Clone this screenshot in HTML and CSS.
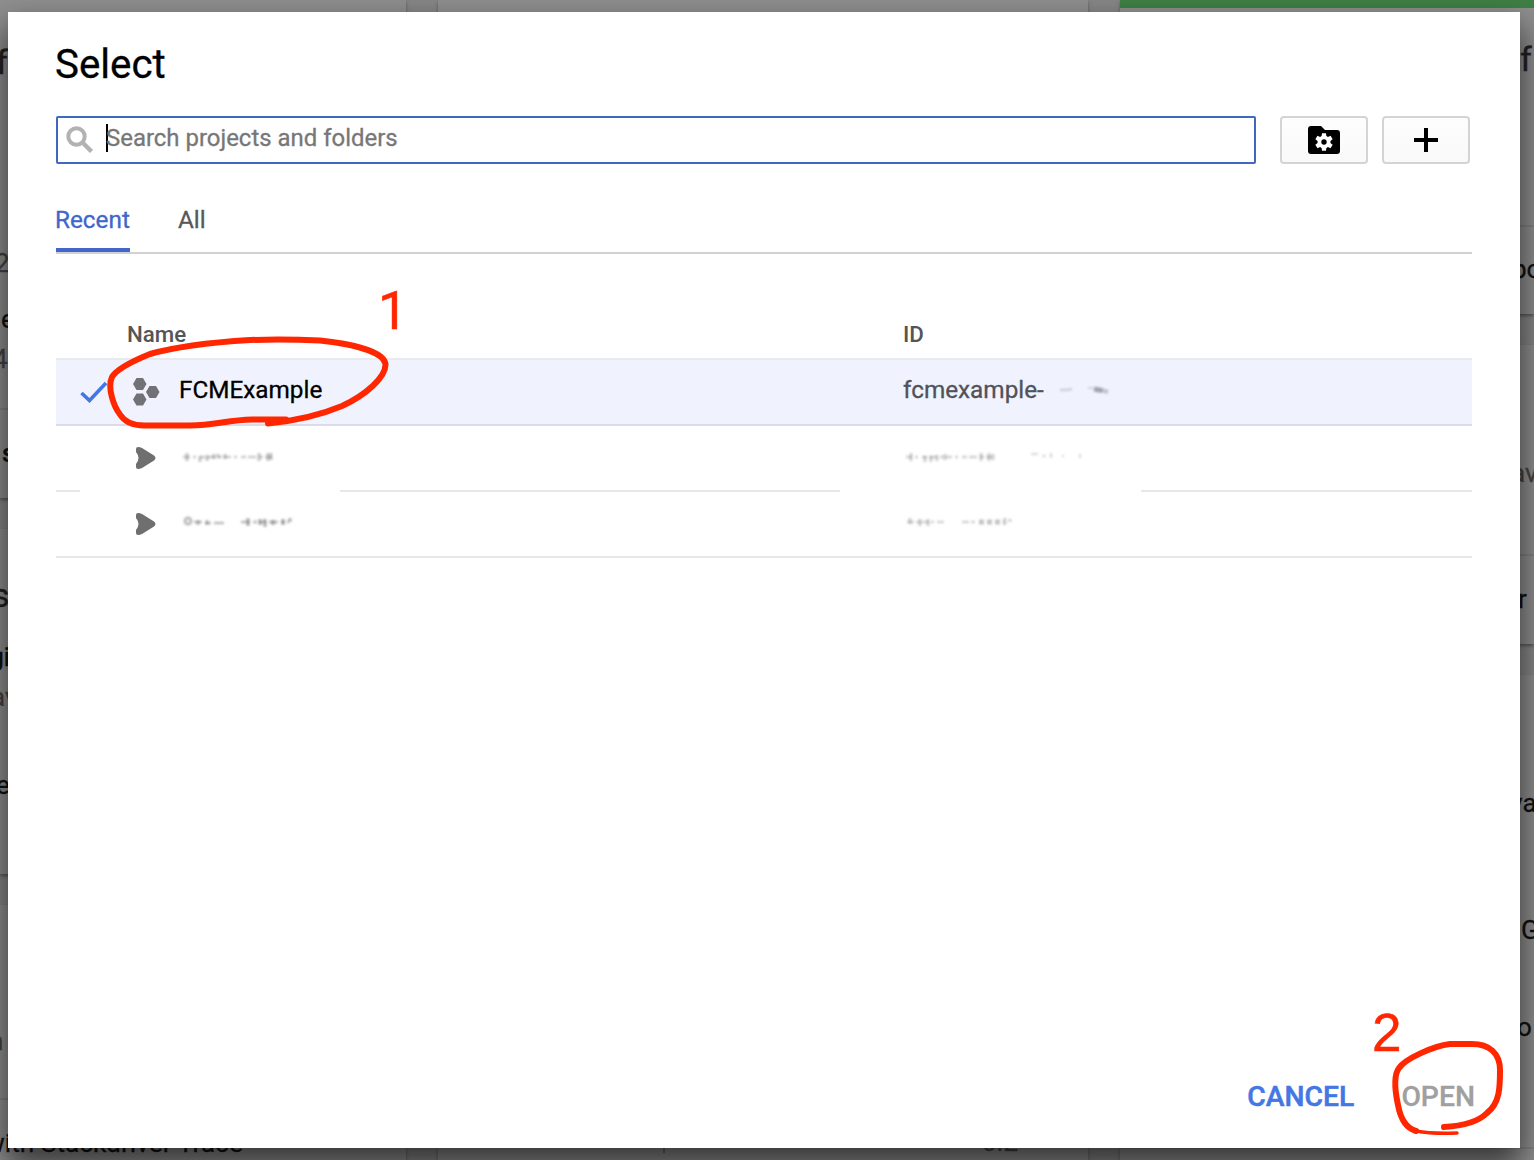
FILE: index.html
```html
<!DOCTYPE html>
<html lang="en">
<head>
<meta charset="utf-8">
<title>Select</title>
<link rel="stylesheet" href="styles.css">
</head>
<body>
<div class="dashboard" aria-hidden="true">
  <div class="column column-left">
    <div class="card l1"><p class="big l-f">f</p><p class="muted l-2">2</p><p class="l-e">e</p><p class="muted l-4">4</p><p class="strong rule l-s">s</p></div>
    <div class="card l2"><p class="big l-s2">s</p><p class="strong l-gi">gi</p><p class="muted l-av">av</p><p class="l-e2">e</p></div>
    <div class="card l3"><p class="muted l-n">n</p><p class="rule l-with">with Stackdriver Trace</p></div>
  </div>
  <div class="column column-middle">
    <div class="card mid"><i class="tick"></i><p class="muted value">0.2</p></div>
  </div>
  <div class="column column-right">
    <div class="card r1"><p class="big r-f">f</p><p class="rule r-bo">bo</p></div>
    <div class="card r2"><p class="muted r-av">av</p><p class="rule r-r">r</p></div>
    <div class="card r3"><p class="r-va">va</p><p class="r-g">G</p><p class="r-ol">o</p><p class="rule"></p></div>
  </div>
</div>

<main class="dialog" role="dialog">
  <h1 class="title">Select</h1>
  <div class="toolbar">
    <div class="search">
      <svg class="search-icon" width="28" height="28" viewBox="0 0 28 28"><circle cx="10.5" cy="10.5" r="8.2" fill="none" stroke="#b2b2b2" stroke-width="4"/><path d="M16.5 16.5 25.5 25.5" stroke="#b2b2b2" stroke-width="4.4"/></svg>
      <span class="caret"></span><span class="placeholder">Search projects and folders</span>
    </div>
    <button class="tool"><svg width="32" height="28" viewBox="0 0 32 28"><path d="M3 0H13L17 4H29Q32 4 32 7V25Q32 28 29 28H3Q0 28 0 25V3Q0 0 3 0Z"/><g transform="translate(16 16)" fill="#fff"><circle r="6.5"/><g id="teeth"><path d="M-2-8.8H2L2.6-4H-2.6Z"/><path d="M-2 8.8H2L2.6 4H-2.6Z"/></g><use href="#teeth" transform="rotate(60)"/><use href="#teeth" transform="rotate(120)"/></g><circle cx="16" cy="16" r="2.7"/></svg></button>
    <button class="tool"><svg width="24" height="24" viewBox="0 0 24 24"><path d="M10 0h4v10h10v4H14v10h-4V14H0v-4h10z"/></svg></button>
  </div>
  <nav class="tabs"><span class="tab active">Recent</span><span class="tab">All</span></nav>
  <div class="table">
    <div class="row head"><span>Name</span><span>ID</span></div>
    <div class="row selected">
      <svg class="check" width="28" height="22" viewBox="0 0 28 22"><path d="M1.5 12 9.5 19.5 26 2" fill="none" stroke="#4277e4" stroke-width="3.6"/></svg>
      <svg class="icon" width="28" height="30" viewBox="0 0 28 30" fill="#707278"><path id="hex" d="M3.5 1H10L13.5 7 10 13H3.5L0 7Z"/><use href="#hex" y="15.5"/><use href="#hex" x="13" y="8"/></svg>
      <span class="name">FCMExample</span>
      <span class="id">fcmexample-</span>
      <svg class="smudge tail" width="56" height="16" viewBox="0 0 56 16" fill="none" stroke="#777b88"><path d="M3 8h6l6-1" stroke-width="2.5" opacity=".28"/><path d="M31 6h5" stroke-width="2" opacity=".25"/><path d="M37 7 45 8.500" stroke-width="5" opacity=".65"/><path d="M44 8 51 10" stroke-width="4" opacity=".4"/></svg>
    </div>
    <div class="row gaps">
      <svg class="icon arrow" width="22" height="24" viewBox="0 0 22 24"><path d="M3 1Q5 1 7 2L19 9.500Q22 12 19 14.500L7 22Q5 23 3 23Q1 23 1 21V18Q6 12 1 6V3Q1 1 3 1Z" fill="#6f6f6f"/></svg>
      <svg class="smudge name" width="96" height="18" viewBox="0 0 96 18" fill="none" stroke="#555"><path d="M1 9h91" stroke-width="2.5" stroke-dasharray="7 3 3 4 5 2 8 3 4 2" opacity=".3"/><path d="M5 5v8M18 8v6M25 7v6M32 6v5M36 6v4M43 6v5M77 5v8M86 5v8M89 5v7" stroke-width="3" opacity=".32"/></svg>
      <svg class="smudge id" width="182" height="18" viewBox="0 0 182 18" fill="none" stroke="#555"><path d="M3 9h88" stroke-width="2.5" stroke-dasharray="6 3 3 4 5 2 8 3 4 2" opacity=".27"/><path d="M8 5v8M22 8v6M28 8v6M34 7v6M42 6v6M78 5v8M86 5v8M90 6v6" stroke-width="3" opacity=".28"/><path d="M128 6h7M139 8h4M148 5v5M159 8h2M177 6v4" stroke-width="2.5" opacity=".2"/></svg>
    </div>
    <div class="row">
      <svg class="icon arrow" width="22" height="24" viewBox="0 0 22 24"><path d="M3 1Q5 1 7 2L19 9.500Q22 12 19 14.500L7 22Q5 23 3 23Q1 23 1 21V18Q6 12 1 6V3Q1 1 3 1Z" fill="#6f6f6f"/></svg>
      <svg class="smudge name" width="112" height="18" viewBox="0 0 112 18" fill="none" stroke="#555"><circle cx="6" cy="8" r="3" stroke-width="3" opacity=".38"/><path d="M12 9h8M23 10h6M32 10h10" stroke-width="2.5" opacity=".38"/><path d="M16 7v5M25 7v5" stroke-width="3" opacity=".35"/><path d="M59 9h48" stroke-width="3" stroke-dasharray="9 3 4 2 7 3" opacity=".35"/><path d="M66 5v8M78 6v6M83 6v8M91 7v5M101 6v6M108 5v4" stroke-width="3.5" opacity=".4"/></svg>
      <svg class="smudge id" width="112" height="18" viewBox="0 0 112 18" fill="none" stroke="#555"><path d="M4 9h27M34 9h8M59 9h13" stroke-width="2.5" stroke-dasharray="7 2 5 1" opacity=".25"/><path d="M76 9h25" stroke-width="5" stroke-dasharray="5 3" opacity=".35"/><path d="M7 5v6M17 6v7M25 6v7M102 5v7M107 6v3" stroke-width="3" opacity=".28"/></svg>
    </div>
  </div>
  <footer class="actions"><button class="cancel">CANCEL</button><button class="open">OPEN</button></footer>
</main>

<svg class="ink" width="1534" height="1160" viewBox="0 0 1534 1160" fill="none" stroke="#ff2600" stroke-width="6" stroke-linecap="round" stroke-linejoin="round">
  <path d="M268 423.500C298 420.500 323 414 342 406C366 395 386 377 385.500 364C384 354 362 345 320 340.500Q285 339 250 340Q185 344 150 354Q118 367 112 377C107 388 114 407 120 414.500Q127 425.500 144 425.500H190C215 425.500 227 420 252 419.500H286"/>
  <path d="M1444 1127C1464 1126 1478 1122 1487 1113C1500 1103 1500 1087 1500 1070C1500 1053 1489 1044 1472 1044H1450C1433 1046 1405 1059 1399 1068C1393 1076 1395 1091 1398 1105Q1402 1127 1416 1131" />
  <path d="M1416 1131Q1432 1134 1457 1133" stroke-width="3.500"/>
</svg>
<span class="step step-1">1</span>
<span class="step step-2">2</span>
</body>
</html>
```
FILE: styles.css
```css
* { box-sizing: border-box; }
body { margin: 0; width: 1534px; height: 1160px; overflow: hidden; position: relative; background: #878787; font-family: Roboto, "Liberation Sans", sans-serif; -webkit-text-stroke: .3px currentColor; }
p, h1 { margin: 0; font-weight: 400; }
button { font: inherit; margin: 0; }

.dashboard { display: flex; gap: 32px; width: 1534px; height: 1160px; overflow: hidden; }
.column { display: flex; flex-direction: column; gap: 31px; flex: none; }
.column-left { width: 406px; }
.column-middle { width: 650px; }
.column-right { width: 414px; }
.card { background: #8f8f8f; box-shadow: 0 2px 3px rgba(0,0,0,.35); flex: none; overflow: hidden; }
.card p { font-size: 26px; line-height: 32px; color: #111; white-space: nowrap; }
.card .big { font-size: 34px; color: #222; }
.card .muted { color: #444; }
.card .strong { font-weight: 500; }
.card .rule { border-top: 2px solid #828282; }
.l1 { height: 498px; padding-top: 46px; }
.l2 { height: 345px; padding-top: 50px; }
.l3 { height: 280px; padding-top: 120px; }
.l-f { margin-left: -4px; }
.l-2 { margin: 169px 0 0 -5px; }
.l-e { margin: 24px 0 0 1px; }
.l-4 { margin: 8px 0 0 -7px; }
.card .l-s { margin-top: 33px; padding: 27px 0 0 2px; }
.l-s2 { margin-left: -8px; }
.l-gi { margin: 30px 0 0 -11px; }
.l-av { margin: 8px 0 0 -9px; }
.l-e2 { margin: 56px 0 0 -4px; }
.l-n { margin-left: -11px; }
.card .l-with { margin-top: 41px; padding-top: 27px; text-indent: -15px; font-size: 26.3px; }
.mid { height: 1200px; display: flex; flex-direction: column; }
.tick { width: 2px; height: 10px; margin: 1143px 0 0 225px; background: #666; }
.mid .value { margin: -27px 0 0 544px; }
.r1 { height: 314px; padding-top: 38px; border-top: 8px solid #3f8045; }
.r2 { height: 299px; padding-top: 112px; }
.r3 { height: 520px; padding-top: 112px; }
.card .r-f { margin: -4px 0 0 400px; line-height: 34px; }
.card .r-bo { margin-top: 149px; padding: 26px 0 0 392px; }
.r-av { margin-left: 391px; }
.card .r-r { margin-top: 65px; padding: 27px 0 0 398px; }
.r-va { margin-left: 390px; }
.r-g { margin: 95px 0 0 401px; }
.r-ol { margin: 65px 0 0 397px; }
.r-ol + .rule { margin-top: 104px; }

.dialog { position: absolute; left: 8px; top: 12px; width: 1512px; height: 1136px; background: #fff; padding: 29px 48px 23px; display: flex; flex-direction: column; box-shadow: 0 16px 30px 2px rgba(0,0,0,.62); }
.title { font-size: 40.3px; line-height: 48px; color: #000; margin-left: -1px; }
.toolbar { display: flex; margin-top: 27px; height: 48px; }
.search { width: 1200px; border: 2px solid #4069bd; border-radius: 2px; display: flex; align-items: center; padding-left: 8px; }
.search-icon { margin-top: 0; }
.caret { width: 2px; height: 28px; background: #000; margin: -4px 0 0 12px; }
.placeholder { font-size: 23.95px; line-height: 32px; color: #777; margin: -5px 0 0 -2px; }
.tool { width: 88px; height: 48px; display: flex; align-items: center; justify-content: center; padding: 0; border: 2px solid #d4d4d4; border-radius: 4px; background: linear-gradient(#fdfdfd, #f9f9f9); margin-left: 24px; }
.tool + .tool { margin-left: 14px; }
.tabs { display: flex; gap: 48px; height: 66px; margin-top: 24px; border-bottom: 2px solid #d2d2d2; font-size: 24.3px; line-height: 64px; color: #585858; }
.tab { height: 64px; }
.tab.active { color: #4066cc; width: 74px; border-bottom: 4px solid #4265ce; text-indent: -1px; }
.table { margin-top: 62px; color: #50525a; font-size: 24.3px; }
.row { display: grid; grid-template-columns: 24px 52px 47px 724px auto 1fr; align-items: center; height: 66px; border-bottom: 2px solid #e7e7e7; }
.head { grid-template-columns: 71px 776px 1fr; height: 44px; padding-bottom: 6px; font-size: 22.3px; font-weight: 500; color: #555; border-color: #e8eaef; -webkit-text-stroke: 0; }
.head span:first-child { grid-column: 2; }
.selected { background: #f0f3fd; border-color: #d9dce8; }
.check { grid-column: 1 / span 2; margin-left: 24px; grid-row: 1; }
.icon { grid-column: 3; grid-row: 1; margin-left: 1px; }
.arrow { margin: 0 0 0 3px; }
.gaps .arrow { margin-top: -2px; }
.name { grid-column: 4; grid-row: 1; }
.id { grid-column: 5; grid-row: 1; }
span.name { color: #000; margin-top: -6px; }
span.id { margin-top: -6px; }
.smudge { filter: blur(1px); margin-top: -4px; }
.smudge.name { margin-left: 3px; }
.smudge.tail { margin-left: 13px; }
.gaps { border-bottom: 0; background: linear-gradient(90deg, #e7e7e7 24px, transparent 24px 284px, #e7e7e7 284px 784px, transparent 784px 1085px, #e7e7e7 1085px) bottom / 100% 2px no-repeat; }
.actions { display: flex; justify-content: flex-end; margin-top: auto; gap: 47px; margin-right: -3px; }
.actions button { border: 0; background: none; padding: 0; font-size: 28.3px; line-height: 56px; font-weight: 500; }
.actions .cancel { color: #4277e4; -webkit-text-stroke: .5px currentColor; }
.open { color: #a0a0a0; }

.ink { position: absolute; left: 0; top: 0; pointer-events: none; }
.step { position: absolute; font: 53px/60px "Liberation Sans", Arial, sans-serif; color: #ff2600; -webkit-text-stroke: .5px currentColor; }
.step-1 { left: 378px; top: 281px; font-family: Roboto, sans-serif; }
.step-2 { left: 1372px; top: 1003px; }
```
